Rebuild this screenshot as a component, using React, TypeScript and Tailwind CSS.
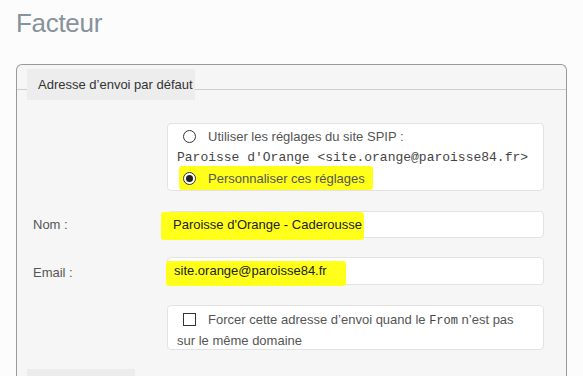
import React from "react";

function Highlight({ className }: { className: string }) {
  return <span className={`absolute bg-[#ffff1a] rounded-[3px] ${className}`} />;
}

export default function App() {
  return (
    <div className="min-h-screen bg-[#fcfcfd] font-['Liberation_Sans',Arial,sans-serif] text-[13px] text-[#444] pl-4 overflow-hidden">
      <h1 className="pt-[8px] text-[26px] leading-[30px] text-[#87929b] tracking-[-0.3px]">Facteur</h1>

      <div className="mt-[26px] w-[551px] border border-b-0 border-[#999] rounded-t-[6px] bg-[#f6f6f6]">
        {/* header with legend */}
        <div className="grid">
          <div className="col-start-1 row-start-1 mt-[24px] h-px bg-[#cfcfcf] self-start" />
          <div className="col-start-1 row-start-1 ml-[10px] mt-[4px] w-[168px] h-[31px] bg-[#ededed] justify-self-start flex items-center pl-[11px] text-[13px] text-[#333]">
            Adresse d’envoi par défaut
          </div>
        </div>

        <div className="pt-[23px] flex flex-col gap-[20px]">
          {/* radio box */}
          <div className="flex">
            <div className="w-[150px]" />
            <div className="w-[377px] bg-white border border-[#e3e3e3] rounded-[4px] pt-[2px] pb-[1px] pl-[9px] text-[#555] leading-[21px]">
              <div className="flex items-center">
                <span className="ml-[6px] w-[13px] h-[13px] rounded-full border border-[#333] bg-white" />
                <span className="ml-[12px]">Utiliser les réglages du site SPIP :</span>
              </div>
              <div className="font-['Liberation_Mono',monospace] text-[13px] text-[#444]">
                Paroisse d'Orange &lt;site.orange@paroisse84.fr&gt;
              </div>
              <div className="relative flex items-center">
                <Highlight className="left-[2px] top-[-2px] w-[194px] h-[24px]" />
                <span className="relative ml-[6px] w-[13px] h-[13px] rounded-full border border-[#333] bg-white flex items-center justify-center">
                  <span className="w-[7px] h-[7px] rounded-full bg-[#222]" />
                </span>
                <span className="relative ml-[12px]">Personnaliser ces réglages</span>
              </div>
            </div>
          </div>

          {/* Nom */}
          <div className="flex items-start">
            <div className="w-[150px] pl-[16px] pt-[4px] text-[#555]">Nom :</div>
            <div className="relative w-[377px] h-[27px] bg-white border border-[#e3e3e3] rounded-[4px] flex items-center pl-[5px] text-[#222]">
              <Highlight className="left-[-7px] top-0 w-[203px] h-[28px]" />
              <span className="relative">Paroisse d'Orange - Caderousse</span>
            </div>
          </div>

          {/* Email */}
          <div className="flex items-start -mt-px">
            <div className="w-[150px] pl-[16px] pt-[6px] text-[#555]">Email :</div>
            <div className="relative w-[377px] h-[28px] bg-white border border-[#e3e3e3] rounded-[4px] flex items-center pl-[6px] text-[#222]">
              <Highlight className="left-[-2px] top-[3px] w-[180px] h-[25px]" />
              <span className="relative">site.orange@paroisse84.fr</span>
            </div>
          </div>

          {/* checkbox */}
          <div className="flex">
            <div className="w-[150px]" />
            <div className="w-[377px] h-[45px] bg-white border border-[#e3e3e3] rounded-[4px] pt-[4px] pl-[9px] pr-[10px] leading-[19px] text-[#555]">
              <span className="inline-block align-[-2px] ml-[6px] mr-[12px] w-[13px] h-[13px] border border-[#333] bg-white" />
              Forcer cette adresse d’envoi quand le{" "}
              <span className="font-['Liberation_Mono',monospace] text-[12px] text-[#444]">From</span> n’est pas sur le même domaine
            </div>
          </div>

          <div className="ml-[10px] mt-[-1px] w-[108px] h-[20px] bg-[#ececec]" />
        </div>
      </div>
    </div>
  );
}
